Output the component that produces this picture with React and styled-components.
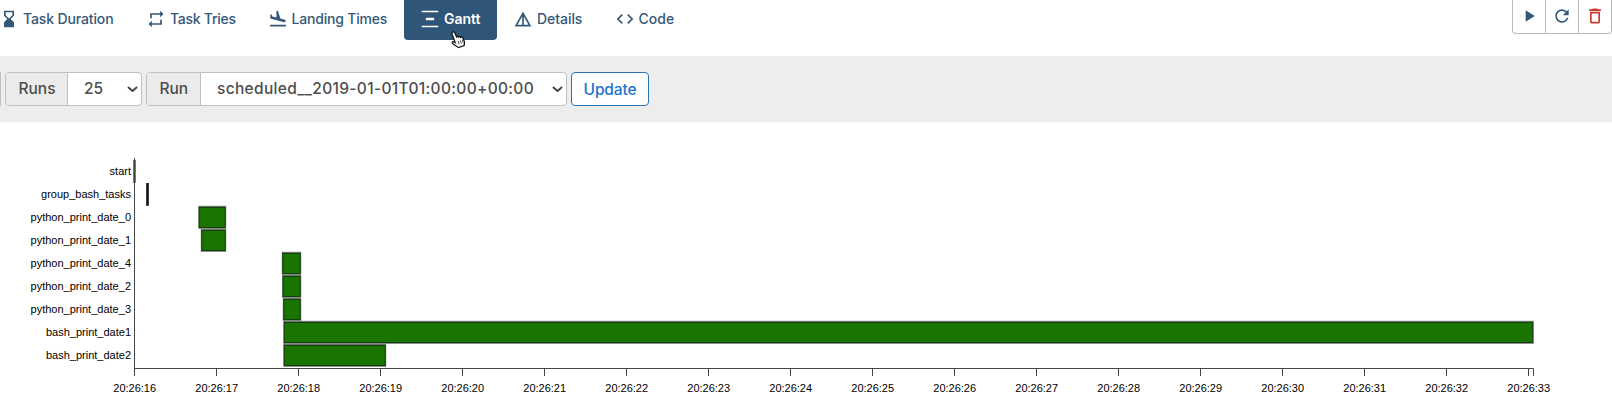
import React from "react";
import styled, { createGlobalStyle } from "styled-components";
import {
  MdHourglassBottom, MdRepeat, MdFlightLand, MdVerticalDistribute, MdDetails,
  MdCode, MdPlayArrow, MdRefresh, MdDeleteOutline,
} from "react-icons/md";

const GlobalStyle = createGlobalStyle`
  * { box-sizing: border-box; }
  body { margin: 0; background: #fff; overflow: hidden; font-family: Inter, "Liberation Sans", sans-serif; }
`;

const Page = styled.main`
  width: 1612px;
  height: 403px;
  display: flex;
  flex-direction: column;
  overflow: hidden;
`;

const Header = styled.header`
  height: 56px;
  flex: none;
  display: flex;
  justify-content: space-between;
  align-items: flex-start;
`;

const Nav = styled.nav`
  display: flex;
  margin-left: -17px;
`;

const NavItem = styled.a`
  position: relative;
  display: flex;
  align-items: center;
  gap: 4px;
  width: ${(p) => p.$width}px;
  height: 40px;
  padding: 0 0 3px 16px;
  border-radius: 0 0 4px 4px;
  white-space: nowrap;
  font-size: 14px;
  font-weight: ${(p) => (p.$active ? 600 : 500)};
  letter-spacing: ${(p) => p.$spacing}px;
  color: ${(p) => (p.$active ? "#fff" : "#34587a")};
  background: ${(p) => (p.$active ? "#2f5578" : "transparent")};
  svg { flex: none; }
`;

const Pointer = styled.svg`
  position: absolute;
  left: 46px;
  top: 30px;
`;

const Actions = styled.div`
  display: flex;
  height: 34px;
  border: 1px solid #bcbcbc;
  border-top: 0;
  border-radius: 0 0 4px 4px;
`;

const Action = styled.button`
  display: flex;
  align-items: center;
  justify-content: center;
  width: ${(p) => p.$width || 33}px;
  padding: 0 0 2px;
  border: 0;
  border-left: ${(p) => (p.$first ? "0" : "1px solid #bcbcbc")};
  background: none;
  color: ${(p) => (p.$danger ? "#c8392f" : "#34587a")};
`;

const Toolbar = styled.form`
  height: 66px;
  flex: none;
  display: flex;
  align-items: center;
  gap: 4px;
  background: #ededed;
`;

const PreviousField = styled.div`
  width: 1px;
  height: 34px;
  background: #c0c0c0;
`;

const Field = styled.label`
  display: flex;
  width: ${(p) => p.$width}px;
  height: 34px;
  border: 1px solid #c0c0c0;
  border-radius: 4px;
  overflow: hidden;
  background: #fff;
`;

const Addon = styled.span`
  flex: none;
  width: ${(p) => p.$width}px;
  padding-left: 12.5px;
  border-right: 1px solid #c0c0c0;
  background: #ebebeb;
  color: #4d4d4d;
  font-size: 15.5px;
  font-weight: 500;
  line-height: 32px;
`;

const SelectBox = styled.span`
  flex: 1;
  display: flex;
  align-items: center;
  padding-right: ${(p) => p.$inset || 3}px;
`;

const Select = styled.select`
  flex: 1;
  min-width: 0;
  height: 32px;
  padding: 0 0 0 16px;
  appearance: none;
  border: 0;
  background: transparent;
  color: #4d4d4d;
  font: 500 15.5px/32px Inter, sans-serif;
  letter-spacing: ${(p) => p.$spacing || 0}px;
`;

const Update = styled.button`
  width: 78px;
  height: 34px;
  padding: 0;
  border: 1px solid #2a76b5;
  border-radius: 4px;
  background: #fff;
  color: #1a73d0;
  font: 500 15.5px Inter, sans-serif;
  letter-spacing: -0.15px;
`;

const Chart = styled.svg`
  display: block;
  flex: none;
  font-family: "Liberation Sans", Arial, sans-serif;
  font-size: 11px;
`;

const tabs = [
  { label: "Task Duration", icon: MdHourglassBottom, width: 147, spacing: -0.13 },
  { label: "Task Tries", icon: MdRepeat, width: 121.5, spacing: -0.27 },
  { label: "Landing Times", icon: MdFlightLand, width: 152.5, spacing: -0.2 },
  { label: "Gantt", icon: MdVerticalDistribute, width: 93, spacing: 0, active: true },
  { label: "Details", icon: MdDetails, width: 101.5, spacing: -0.05 },
  { label: "Code", icon: MdCode, width: 92, spacing: 0 },
];

const tasks = [
  { name: "start", x: 134, w: 1, color: "#555" },
  { name: "group_bash_tasks", x: 147, w: 1, color: "#111" },
  { name: "python_print_date_0", x: 199, w: 26.5 },
  { name: "python_print_date_1", x: 201.5, w: 24 },
  { name: "python_print_date_4", x: 282.5, w: 18 },
  { name: "python_print_date_2", x: 282.8, w: 17.7 },
  { name: "python_print_date_3", x: 283.5, w: 17 },
  { name: "bash_print_date1", x: 284, w: 1249 },
  { name: "bash_print_date2", x: 284, w: 101.5 },
];

function Chevron() {
  return (
    <svg width="11" height="8" viewBox="0 0 11 8" fill="none" stroke="#444" strokeWidth="1.9" strokeLinecap="round" strokeLinejoin="round">
      <path d="M1.5 2.5 5.5 6l4-3.5" />
    </svg>
  );
}

function Hand() {
  return (
    <Pointer width="17" height="19" viewBox="0 0 17 19">
      <path d="M2.5 2.2c1-.8 2 .1 2.4 1l1.7 3.7c.5-.8 1.7-.7 2.1.2.6-.8 1.8-.6 2.2.3.8-.6 1.9-.1 2.2.8l1.2 3.3c.5 1.5-.1 2.6-.1 4l-5.7 2.1c-1.2-1.4-3.5-1.8-5.6-3.8-1-.9-.8-2.2.2-2.2.8 0 1.5.5 2.1.9L2.1 4.1c-.3-.8-.2-1.4.4-1.9Z" fill="#fff" stroke="#111" strokeWidth="1.2" />
      <path d="m8 11 1.2 3.2M10.2 10.3l1.1 3.1M12.2 9.6l1 3" stroke="#111" strokeWidth=".8" />
    </Pointer>
  );
}

function GanttChart() {
  return (
    <Chart width="1612" height="281" viewBox="0 122 1612 281">
      {tasks.map((t, i) => {
        const top = 160 + i * 23;
        return (
          <g key={t.name}>
            <text x="131" y={top + 15} textAnchor="end" textLength={t.name.startsWith("python") ? 100.5 : undefined}>{t.name}</text>
            {t.color ? (
              <rect x={t.x - 0.8} y={top} width="2.6" height="22.8" fill={t.color} />
            ) : (
              <>
                <rect x={t.x - 0.7} y={top - 0.2} width={t.w + 1.4} height="23" fill="#6b7a68" />
                <rect x={t.x + 0.3} y={top + 1.5} width={t.w - 0.6} height="20" fill="#1a7500" stroke="#173d10" />
              </>
            )}
          </g>
        );
      })}
      <path d="M134.5 158V376M134.5 368.5H1533.5V376" fill="none" stroke="#444" />
      {Array.from({ length: 18 }, (_, i) => (
        <g key={i}>
          <path d={`M${134.5 + i * 82} 368.5V376`} stroke="#444" />
          <text x={134.7 + i * 82} y="392" textAnchor="middle">{`20:26:${16 + i}`}</text>
        </g>
      ))}
    </Chart>
  );
}

export default function App() {
  return (
    <Page>
      <GlobalStyle />
      <Header>
        <Nav>
          {tabs.map(({ label, icon: Icon, width, spacing, active }) => (
            <NavItem key={label} $width={width} $spacing={spacing} $active={active}>
              <Icon size={20} />
              {label}
              {active && <Hand />}
            </NavItem>
          ))}
        </Nav>
        <Actions>
          <Action $first $width={32} aria-label="Trigger"><MdPlayArrow size={20} /></Action>
          <Action aria-label="Refresh"><MdRefresh size={20} /></Action>
          <Action $danger aria-label="Delete"><MdDeleteOutline size={20} /></Action>
        </Actions>
      </Header>
      <Toolbar>
        <PreviousField />
        <Field $width={137}>
          <Addon $width={62}>Runs</Addon>
          <SelectBox><Select><option>25</option></Select><Chevron /></SelectBox>
        </Field>
        <Field $width={421}>
          <Addon $width={54}>Run</Addon>
          <SelectBox><Select $spacing={0.33}><option>scheduled__2019-01-01T01:00:00+00:00</option></Select><Chevron /></SelectBox>
        </Field>
        <Update type="button">Update</Update>
      </Toolbar>
      <GanttChart />
    </Page>
  );
}
